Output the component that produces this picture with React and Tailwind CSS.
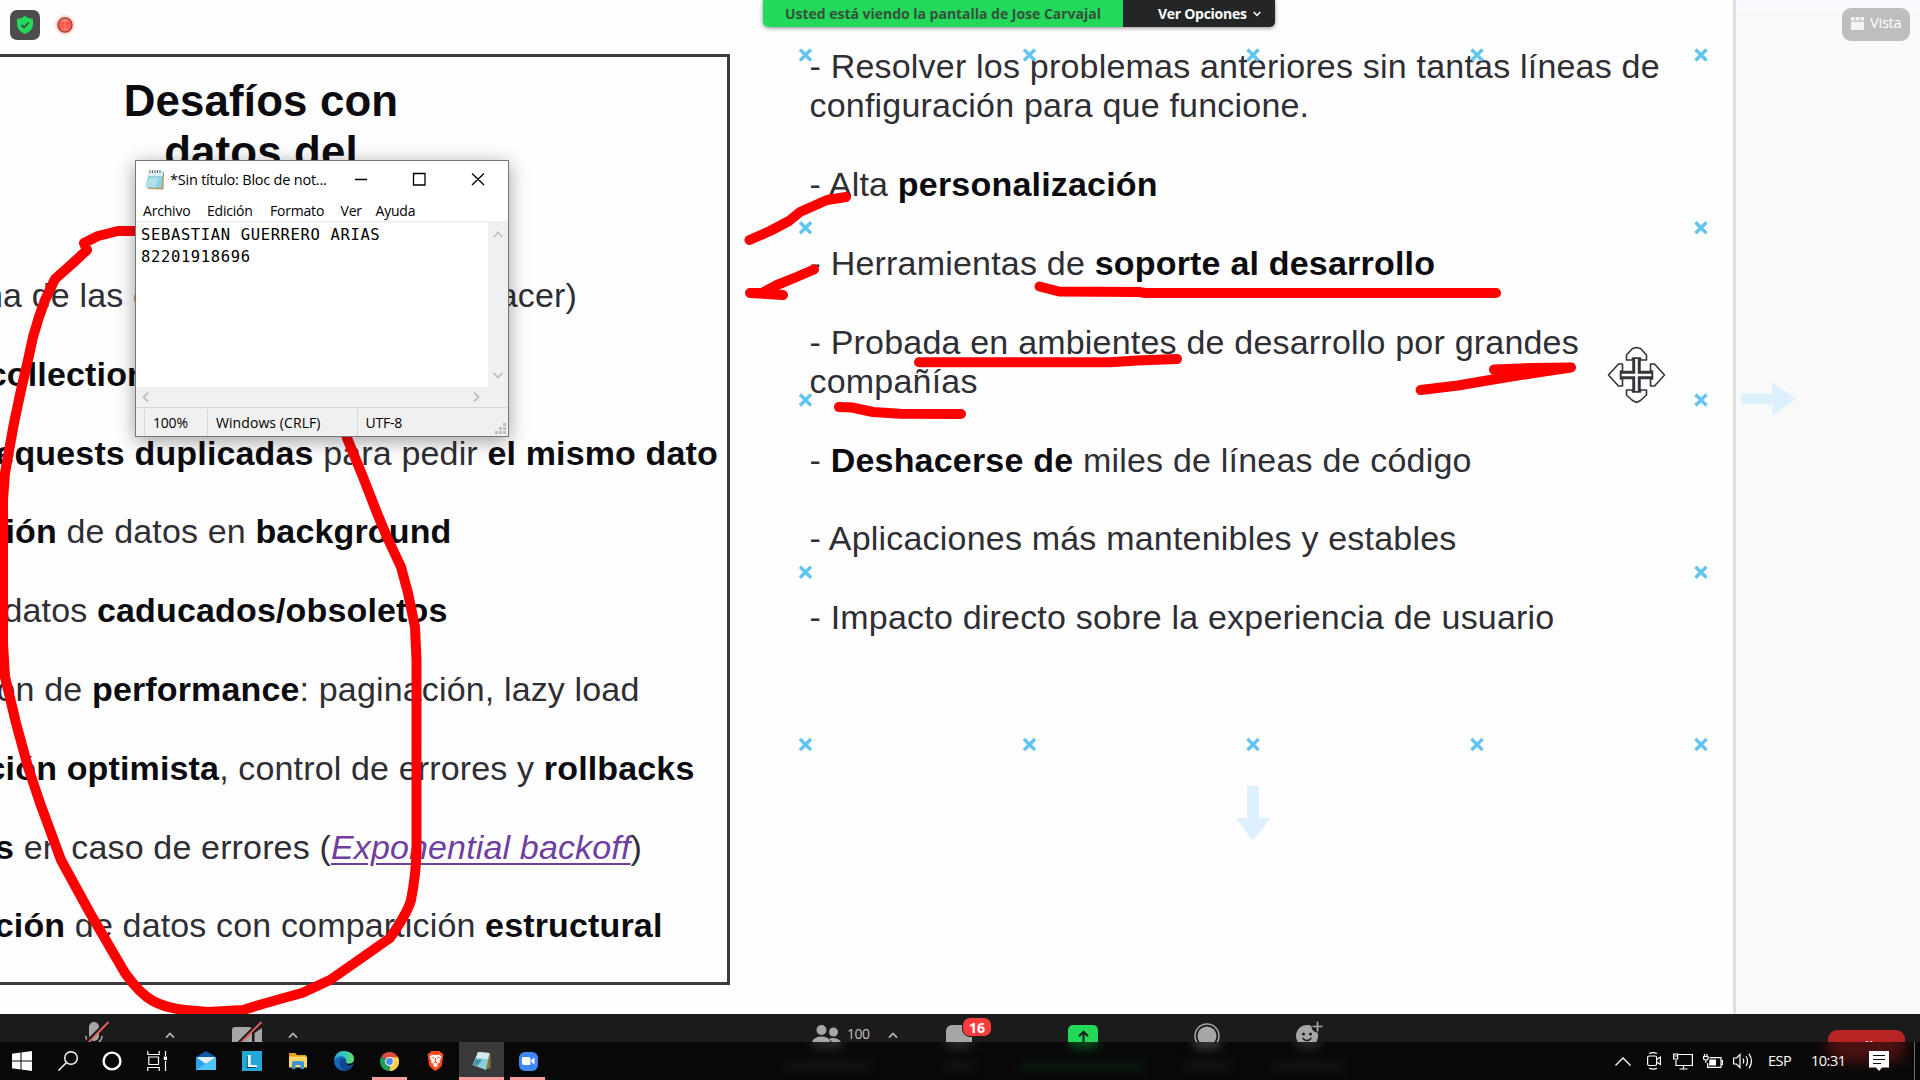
import React from "react";

const B = ({ children }) => <b className="font-bold text-[#0c0c10]">{children}</b>;

const Line = ({ w, children }) => (
  <p className={`flex h-[78.8px] justify-end leading-[78.8px] whitespace-pre ${w}`}>
    <span>{children}</span>
  </p>
);

const marks = [
  [805.5, 55], [1029.5, 55], [1253, 55], [1477, 55], [1701, 55],
  [805.5, 227.7], [1701, 227.7],
  [805.5, 400], [1701, 400],
  [805.5, 572.3], [1701, 572.3],
  [805.5, 744.5], [1029.5, 744.5], [1253, 744.5], [1477, 744.5], [1701, 744.5],
];

function ChallengesBox() {
  return (
    <section className="mt-[54px] flex h-[931px] w-[730px] shrink-0 flex-col border-y-[3px] border-r-[3px] border-[#3b3b3d] pt-[18px] text-[34px] tracking-[0.15px] text-[#2e2e34]">
      <h1 className="mb-[78.400px] w-[522px] text-center text-[43.8px] leading-[51.3px] font-bold text-[#0c0c10]">
        Desafíos con
        <br />
        datos del
      </h1>
      <p className="-ml-[16px] flex h-[78.8px] w-[593px] justify-between leading-[78.8px] whitespace-pre">
        <span>na de las c</span>
        <span>hacer)</span>
      </p>
      <Line w="w-[148px]"><B>collection</B></Line>
      <Line w="w-[718px]"><B>requests duplicadas</B> para pedir <B>el mismo dato</B></Line>
      <Line w="w-[451.500px]"><B>ción</B> de datos en <B>background</B></Line>
      <Line w="w-[447.500px]">datos <B>caducados/obsoletos</B></Line>
      <Line w="w-[639.500px]">ón de <B>performance</B>: paginación, lazy load</Line>
      <Line w="w-[694.500px]"><B>ción optimista</B>, control de errores y <B>rollbacks</B></Line>
      <Line w="w-[642px]">
        <B>s</B> en caso de errores (<i className="text-[#6f3fa0] underline decoration-[2px] underline-offset-[4px]">Exponential backoff</i>)
      </Line>
      <Line w="w-[662.500px]"><B>ción</B> de datos con compartición <B>estructural</B></Line>
    </section>
  );
}

function Benefits() {
  return (
    <section className="ml-[79.500px] flex w-[923.500px] shrink-0 flex-col gap-[39.36px] pt-[47px] text-[34px] leading-[39.36px] tracking-[0.2px] whitespace-nowrap text-[#2e2e34]">
      <p>- Resolver los problemas anteriores sin tantas líneas de<br />configuración para que funcione.</p>
      <p>- Alta <B>personalización</B></p>
      <p>- Herramientas de <B>soporte al desarrollo</B></p>
      <p>- Probada en ambientes de desarrollo por grandes<br />compañías</p>
      <p>- <B>Deshacerse de</B> miles de líneas de código</p>
      <p>- Aplicaciones más mantenibles y estables</p>
      <p>- Impacto directo sobre la experiencia de usuario</p>
    </section>
  );
}

function Annotations() {
  return (
    <svg className="absolute inset-0" width="1920" height="1014" viewBox="0 0 1920 1014" fill="none">
      <g stroke="#62c4f1" strokeWidth="3.400">
        {marks.map(([x, y]) => (
          <path key={`${x}-${y}`} d={`M${x - 5.5} ${y - 5.5}l11 11m0-11l-11 11`} />
        ))}
      </g>
      <g fill="#dcf1fb">
        <path d="M1741 393.500h31.500v-11l24 16.500-24 16.500v-11h-31.500z" />
        <path d="M1247 786h12v32h11.500l-17.500 23-17.500-23h11.500z" />
      </g>
      <g stroke="#ff0000" strokeWidth="10" strokeLinecap="round" strokeLinejoin="round">
        <path d="M150 231H118L98 236 84 243 87 250 73 263 55 279 45 300 39 317 33 337 28 360 21 390 14 423 5 473 3 500V643L5 677 16 723 28 767 40 803 61 860 90 913 125 973Q140 994 153 1001Q166 1008 185 1010L208 1012 243 1010Q265 1003 302 993L330 980 363 957 390 938Q408 912 411 900Q416 875 416.500 850V660L415 627 408 593 401 567 387 537 377 513 363 477 347 438 343 420" />
        <path d="M749.500 240L770 231 789 221 800 212 827 200 846 197" />
        <path d="M814 269.500L796.500 277 777 285 762 293H750L783 295" />
        <path d="M1039.500 286.500L1059 291.500 1139 292 1145 293H1496" />
        <path d="M919 362.300H1110L1137 360.500 1177 359" />
        <path d="M839 407L852 407.500 873 412 900 413.700 961 414" />
        <path d="M1420.600 390L1458 385.500 1490 380 1537 372.500 1571 367.500 1533 368 1494 369.500 1515 373" />
      </g>
      <g transform="translate(1636.500 375)">
        <path d="M-16 0H16M0-17V17" stroke="#fff" strokeWidth="11" />
        <path d="M-16 0H16M0-17V17" stroke="#34343a" strokeWidth="8.500" />
        <path d="M-15 0H15M0-16V16" stroke="#fff" strokeWidth="2.600" />
        <g fill="#fff" stroke="#34343a" strokeWidth="1.600" strokeLinejoin="round">
          <path d="M-10-15V-20L-4-26.500 0-27.500 4-26.500 10-20V-15H4V-17H-4V-15Z" />
          <path d="M-10 15V20L-4 25.500 0 27.500 4 25.500 10 20V15H4V17H-4V15Z" />
          <path d="M-14-4V-11H-18L-28 0-18 11H-14V4H-16V-4Z" />
          <path d="M14-4V-11H18L28 0 18 11H14V4H16V-4Z" />
        </g>
      </g>
    </svg>
  );
}

function ShareBanner() {
  return (
    <div className="absolute top-0 left-[763px] flex h-[27px] w-[512px] overflow-hidden rounded-b-[5px] font-['Open_Sans','Noto_Sans',sans-serif] text-[14px] leading-[27px] font-bold whitespace-nowrap shadow-[0_1px_4px_rgba(0,0,0,0.45)]">
      <div className="w-[360px] bg-[#23d959] pl-[22px] tracking-[-0.02px] text-[#36513e]">Usted está viendo la pantalla de Jose Carvajal</div>
      <div className="flex flex-1 items-center gap-[6px] bg-[#242526] pl-[35px] tracking-[-0.28px] text-white">
        Ver Opciones
        <svg width="8" height="6" viewBox="0 0 8 6" fill="none" stroke="#fff" strokeWidth="1.500"><path d="M.7 1L4 4.500 7.300 1" /></svg>
      </div>
    </div>
  );
}

function MeetingBadges() {
  return (
    <>
      <div className="absolute top-[10px] left-[10px] flex items-center gap-[14px]">
        <div className="flex h-[30px] w-[30px] items-center justify-center rounded-[7px] bg-[#4d4d4d]">
          <svg width="16" height="18" viewBox="0 0 16 18"><path d="M8 0Q11 2.500 16 3V8Q16 15 8 18Q0 15 0 8V3Q5 2.500 8 0Z" fill="#23d959" /><path d="M4.500 9L7 11.500 11.700 6.500" fill="none" stroke="#3d4d40" strokeWidth="1.800" /></svg>
        </div>
        <svg width="22" height="24" viewBox="0 0 22 24">
          <defs>
            <radialGradient id="halo"><stop offset=".6" stopColor="#ff8a70" stopOpacity=".6" /><stop offset="1" stopColor="#ff8a70" stopOpacity="0" /></radialGradient>
            <linearGradient id="lamp" x1="0" y1="0" x2="0" y2="1"><stop offset="0" stopColor="#ff9a94" /><stop offset=".45" stopColor="#f7473d" /><stop offset="1" stopColor="#ff7c72" /></linearGradient>
          </defs>
          <circle cx="11" cy="12" r="11" fill="url(#halo)" />
          <circle cx="11" cy="12" r="7" fill="url(#lamp)" stroke="#a5423a" strokeWidth="1.400" />
          <path d="M5 12h12M11 6v12" stroke="#ffaaa2" strokeWidth=".7" opacity=".6" />
        </svg>
      </div>
      <div className="absolute top-[8px] right-[10px] flex h-[33px] w-[68px] items-center gap-[6px] rounded-[9px] bg-[#bebebe] pb-[3px] pl-[9px] font-['Open_Sans','Noto_Sans',sans-serif] text-[14.500px] tracking-[-0.200px] text-white">
        <svg width="13" height="13" viewBox="0 0 13 13" fill="#f4f4f4"><path d="M0 0h3.600v3.500H0zM4.700 0h3.600v3.500H4.700zM9.400 0H13v3.500H9.400zM0 4.700h13V12q0 1-1 1H1q-1 0-1-1z" /></svg>
        Vista
      </div>
    </>
  );
}

const Notebook = ({ size }) => (
  <svg width={size} height={size} viewBox="0 0 20 20">
    <path d="M5 3L19 2 18.500 19.500 3 19Z" fill="#b49a5c" />
    <path d="M4 1.500L18 1.500 16.500 18 0.500 17.500Z" fill="#8fd0e2" />
    <path d="M4 1.500L18 1.500 17.500 6 3.200 6Z" fill="#d9f0f5" />
    <path d="M4 8L14 7.500 10 17.500 1 16.500Z" fill="#b9e4ee" opacity=".8" />
    <path d="M5 0v3M7.500 0v3M10 0v3M12.500 0v3M15 0v3" stroke="#5d7178" strokeWidth="1" />
  </svg>
);

function Notepad() {
  return (
    <div className="absolute top-[160px] left-[135px] flex h-[277px] w-[374px] flex-col border border-[#767676] bg-white font-['Open_Sans','Noto_Sans',sans-serif] text-[14px] tracking-[-0.2px] text-black shadow-[0_4px_18px_rgba(0,0,0,0.38)]">
      <div className="flex h-[37px] shrink-0 items-center pl-[9px]">
        <Notebook size={20} />
        <span className="ml-[5px] w-[185px] text-[14.500px] tracking-[-0.22px] whitespace-nowrap">*Sin título: Bloc de not...</span>
        <svg className="mt-[-1px]" width="130" height="14" viewBox="0 0 130 14" fill="none" stroke="#000" strokeWidth="1.300"><path d="M0 7.500h12M58.500 1.500h11.500v11.500H58.500zM117 1.500l12 11.500m0-11.500l-12 11.500" /></svg>
      </div>
      <div className="flex h-[25px] shrink-0 items-center gap-[14.500px] border-b-[2px] border-[#f0f0f0] pt-[1px] pl-[7px]">
        <span className="w-[49.500px]">Archivo</span>
        <span className="w-[48.500px]">Edición</span>
        <span className="w-[56px]">Formato</span>
        <span className="w-[20.500px]">Ver</span>
        <span>Ayuda</span>
      </div>
      <div className="flex flex-1">
        <div className="flex-1 pt-[1px] pl-[5px] font-['DejaVu_Sans_Mono',monospace] text-[15.500px] leading-[22px] tracking-[0.64px] whitespace-pre">
          SEBASTIAN GUERRERO ARIAS
          <br />
          82201918696
        </div>
        <div className="flex w-[20px] flex-col items-center justify-between bg-[#f0f0f0] py-[8px]">
          <svg width="10" height="7" viewBox="0 0 10 7" fill="none" stroke="#bdbdbd" strokeWidth="1.800"><path d="M.7 6L5 1.500 9.300 6" /></svg>
          <svg width="10" height="7" viewBox="0 0 10 7" fill="none" stroke="#bdbdbd" strokeWidth="1.800"><path d="M.7 1L5 5.500 9.300 1" /></svg>
        </div>
      </div>
      <div className="flex h-[20px] shrink-0 items-center justify-between bg-[#f0f0f0] pr-[28px] pl-[6px]">
        <svg width="7" height="10" viewBox="0 0 7 10" fill="none" stroke="#bdbdbd" strokeWidth="1.800"><path d="M6 .7L1.500 5 6 9.300" /></svg>
        <svg width="7" height="10" viewBox="0 0 7 10" fill="none" stroke="#bdbdbd" strokeWidth="1.800"><path d="M1 .7L5.500 5 1 9.300" /></svg>
      </div>
      <div className="flex h-[29px] shrink-0 border-t border-[#d7d7d7] bg-[#f0f0f0] pt-[1px] pl-[8px] leading-[27px]">
        <span className="w-[63px] border-l border-[#d7d7d7] pl-[8px]">100%</span>
        <span className="w-[150px] border-l border-[#d7d7d7] pl-[8px] tracking-[0.08px]">Windows (CRLF)</span>
        <span className="flex-1 border-l border-[#d7d7d7] pl-[7.500px]">UTF-8</span>
        <svg className="mt-[14px] mr-[2px]" width="11" height="11" viewBox="0 0 11 11" fill="#bdbdbd"><path d="M8 0h3v3H8zM8 4h3v3H8zM8 8h3v3H8zM4 4h3v3H4zM4 8h3v3H4zM0 8h3v3H0z" /></svg>
      </div>
    </div>
  );
}

const Caret = ({ className }) => (
  <svg className={`absolute ${className}`} width="10" height="7" viewBox="0 0 10 7" fill="none" stroke="#b4b4b4" strokeWidth="1.800"><path d="M1 5.700L5 1.500 9 5.700" /></svg>
);

function MeetingToolbar() {
  return (
    <div className="relative flex h-[28px] shrink-0 overflow-hidden bg-[#1b1b1b] font-['Open_Sans','Noto_Sans',sans-serif] text-[#b4b4b4]">
      <svg className="mt-[6px] ml-[84px] shrink-0" width="28" height="22" viewBox="0 0 28 22" fill="none">
        <rect x="5" y="2" width="10" height="19" rx="5" fill="#a6a6a6" />
        <path d="M1.800 16Q2 22 9 24M18 16Q18 22 11 24" stroke="#a6a6a6" strokeWidth="1.600" />
        <path d="M2 23L23 2" stroke="#1b1b1b" strokeWidth="3.500" />
        <path d="M4 23L24.500 2" stroke="#f0605d" strokeWidth="1.800" />
      </svg>
      <Caret className="top-[18px] left-[165px]" />
      <svg className="mt-[6px] ml-[120px] shrink-0" width="32" height="22" viewBox="0 0 32 22" fill="none">
        <path d="M0 22V10Q0 7 3 7H17Q20 7 20 10V22ZM22.500 13L30 8V22H22.500Z" fill="#a6a6a6" />
        <path d="M6 24L28 2" stroke="#1b1b1b" strokeWidth="3.500" />
        <path d="M7.500 24L29.500 2" stroke="#f0605d" strokeWidth="1.800" />
      </svg>
      <Caret className="top-[18px] left-[288px]" />
      <svg className="mt-[10px] ml-[548px] shrink-0" width="30" height="18" viewBox="0 0 30 18" fill="#a6a6a6">
        <circle cx="9.500" cy="6" r="5" /><circle cx="21.500" cy="8" r="4.500" />
        <path d="M0 18Q2 12.500 9.500 12.500T18.500 18ZM17 14.500Q25 12.500 29 18H20Z" />
      </svg>
      <span className="ml-[5px] pt-[8.500px] text-[14px] leading-[22px] tracking-[-0.5px] text-[#c2c2c2]">100</span>
      <Caret className="top-[18px] left-[888px]" />
      <div className="absolute top-[11px] left-[946px] h-[30px] w-[26px] rounded-[6px] bg-[#a6a6a6]" />
      <div className="absolute top-[3px] left-[962px] flex h-[20px] w-[30px] items-center justify-center rounded-[8px] border border-[#1b1b1b] bg-[#fa3c3c] text-[14px] font-bold text-white">16</div>
      <div className="absolute top-[11px] left-[1068px] h-[30px] w-[30px] rounded-[5px] bg-[#23d959] pl-[10px]">
        <svg className="mt-[5px]" width="11" height="14" viewBox="0 0 11 14" fill="none" stroke="#1b1b1b" strokeWidth="2"><path d="M5.500 14V2M1 6.200L5.500 1.700 10 6.200" /></svg>
      </div>
      <svg className="absolute top-[9px] left-[1194px]" width="26" height="26" viewBox="0 0 26 26"><circle cx="13" cy="13" r="12" fill="none" stroke="#a6a6a6" strokeWidth="1.500" /><circle cx="13" cy="13" r="9.500" fill="#a6a6a6" /></svg>
      <svg className="absolute top-[6px] left-[1295px]" width="30" height="28" viewBox="0 0 30 28" fill="none">
        <circle cx="12" cy="16" r="11" fill="#a6a6a6" />
        <circle cx="22.500" cy="6.500" r="6" fill="#1b1b1b" />
        <path d="M22.500 1.500v10M17.500 6.500h10" stroke="#a6a6a6" strokeWidth="1.700" />
        <circle cx="8.500" cy="14" r="1.500" fill="#1b1b1b" /><circle cx="15.500" cy="14" r="1.500" fill="#1b1b1b" />
        <path d="M7.500 18Q12 23 16.500 18" stroke="#1b1b1b" strokeWidth="1.600" />
      </svg>
      <div className="absolute top-[16px] left-[1828px] h-[32px] w-[77px] rounded-[9px] bg-[#b72424] pt-[6px] pr-[5px] text-center text-[15px] leading-[20px] font-semibold text-white">Salir</div>
    </div>
  );
}

const Slot = ({ w = "w-[46px]", className = "", children }) => (
  <div className={`relative flex h-full shrink-0 items-center justify-center ${w} ${className}`}>{children}</div>
);

function Taskbar() {
  return (
    <div className="relative flex h-[38px] shrink-0 overflow-hidden bg-[#080808] text-white">
      <div className="absolute top-[-14px] left-[1826px] h-[34px] w-[80px] rounded-full bg-[#7a1818] opacity-60 blur-[7px]" />
      <div className="absolute top-[-8px] left-[1070px] h-[14px] w-[28px] bg-[#0c7a2d] opacity-60 blur-[5px]" />
      <div className="absolute top-[-7px] left-[812px] h-[14px] w-[30px] bg-[#555] opacity-40 blur-[5px]" />
      <div className="absolute top-[-7px] left-[946px] h-[14px] w-[26px] bg-[#555] opacity-40 blur-[5px]" />
      <div className="absolute top-[-7px] left-[1194px] h-[14px] w-[26px] bg-[#666] opacity-50 blur-[5px]" />
      <div className="absolute top-[-7px] left-[1296px] h-[14px] w-[24px] bg-[#555] opacity-40 blur-[5px]" />
      <div className="absolute top-[19px] left-[782px] h-[10px] w-[88px] bg-[#141414] blur-[5px]" />
      <div className="absolute top-[19px] left-[944px] h-[10px] w-[30px] bg-[#141414] blur-[5px]" />
      <div className="absolute top-[19px] left-[1020px] h-[10px] w-[126px] bg-[#091a0e] blur-[5px]" />
      <div className="absolute top-[19px] left-[1184px] h-[10px] w-[46px] bg-[#141414] blur-[5px]" />
      <div className="absolute top-[19px] left-[1270px] h-[10px] w-[76px] bg-[#141414] blur-[5px]" />

      <Slot w="w-[45px]" className="pr-px"><svg width="20" height="20" viewBox="0 0 20 20" fill="#fff"><path d="M0 2.800L8.500 1.600V9.500H0ZM9.500 1.500L20 0V9.500H9.500ZM0 10.500H8.500V18.400L0 17.200ZM9.500 10.500H20V20L9.500 18.500Z" /></svg></Slot>
      <Slot w="w-[45px]"><svg width="20" height="20" viewBox="0 0 20 20" fill="none" stroke="#fff" strokeWidth="1.400"><circle cx="13" cy="7" r="6.300" /><path d="M8.500 11.500L.5 19.500" /></svg></Slot>
      <Slot w="w-[45px]" className="pr-px"><svg width="20" height="20" viewBox="0 0 20 20" fill="none" stroke="#fff" strokeWidth="2.400"><circle cx="10" cy="10" r="8.400" /></svg></Slot>
      <Slot w="w-[48px]" className="pr-[4px]"><svg width="20" height="20" viewBox="0 0 20 20" fill="none" stroke="#fff" strokeWidth="1.200"><path d="M.8 0V3.500H12.200V0M.8 20V16.500H12.200V20M1.800 6H11.500V13.500H1.800ZM18.500 0V5M18.500 10V20" /><path d="M16.800 5.500H20V9H16.800Z" fill="#fff" stroke="none" /></svg></Slot>
      <Slot><svg width="20" height="20" viewBox="0 0 20 20"><path d="M0 6L10 0 20 6V14H0Z" fill="#0a5aa8" /><path d="M1.500 6H18.500V13H1.500Z" fill="#e9f3fa" /><path d="M0 6L10 13 20 6V19H0Z" fill="#2ba3ec" /><path d="M0 19L20 6V19Z" fill="#4fc6f7" /></svg></Slot>
      <Slot><div className="flex h-[20px] w-[20px] items-center justify-center bg-[#22a9d8] pt-px font-['Liberation_Sans',sans-serif] text-[17px] leading-[20px] font-bold text-white [text-shadow:-1px_1px_0_#143f66]">L</div></Slot>
      <Slot><svg width="18" height="16" viewBox="0 0 18 16"><path d="M0 0H6.500L8 2H17V6H0Z" fill="#e5a219" /><path d="M0 3.500H18V14.500H0Z" fill="#fcd866" /><path d="M3 16V10Q3 8 5 8H13Q15 8 15 10V16H11.500V12H6.500V16Z" fill="#3d95dc" /></svg></Slot>
      <Slot>
        <svg width="20" height="20" viewBox="0 0 20 20">
          <defs><linearGradient id="edgeTop"><stop offset="0" stopColor="#26a7dd" /><stop offset=".55" stopColor="#37c9b8" /><stop offset="1" stopColor="#63dc55" /></linearGradient></defs>
          <circle cx="10" cy="10" r="10" fill="#1468bd" />
          <path d="M0 9.500Q1 0 10 0Q20 .5 20 8Q19.500 12.500 15 12.800Q11.500 12.800 12 10.800Q13 8 10 6Q5 3.500 0 9.500Z" fill="url(#edgeTop)" />
          <path d="M5.500 12Q5.500 7 10.500 7.500Q12.500 9 11.700 11.500Q12 14 15.500 14.200 18 14 19.500 12.800 17 19.500 11 19.500 6 17.500 5.500 12Z" fill="#0c4a8d" />
          <path d="M10.500 7.500Q12.500 9 11.700 11.500Q12 14 15.500 14.200 18 14 20 12.500V10.500Q18 12.800 15 12.800 11.500 12.800 12 10.800 12.500 9 10.500 7.500Z" fill="#080808" />
        </svg>
      </Slot>
      <Slot className="pr-px">
        <svg width="19" height="19" viewBox="0 0 20 20">
          <path d="M10 10L1.340 5A10 10 0 0 1 18.660 5Z" fill="#dd4b3e" />
          <path d="M10 10L18.660 5A10 10 0 0 1 10 20Z" fill="#fdd04e" />
          <path d="M10 10L10 20A10 10 0 0 1 1.340 5Z" fill="#1b9e5a" />
          <path d="M10 5.500H18.900A10 10 0 0 1 10 20L14 12Z" fill="#fdd04e" />
          <circle cx="10" cy="10" r="4.700" fill="#f4f4f4" /><circle cx="10" cy="10" r="3.600" fill="#4a8af4" />
        </svg>
        <div className="absolute bottom-0 left-[5px] h-[3px] w-[35px] bg-[#ff9da0]" />
      </Slot>
      <Slot className="pr-px">
        <svg width="17" height="20" viewBox="0 0 17 20"><path d="M4.500 0H12.500L14.500 2 16.500 3 16 6 15 14Q14.500 16 8.500 20 2.500 16 2 14L1 6 .5 3 2.500 2Z" fill="#fb4b1c" /><path d="M4.500 3.500L8.500 4.200 12.500 3.500 14.500 6 12.500 10 13 11.500 10 13 11 14.500 8.500 16.500 6 14.500 7 13 4 11.500 4.500 10 2.500 6Z" fill="#fff" /><path d="M4.500 6.500L7 7.200M12.500 6.500L10 7.200M8.500 7V11M6.500 11L8.500 12 10.500 11" stroke="#fb4b1c" strokeWidth="1" fill="none" /></svg>
      </Slot>
      <Slot className="pb-px">
        <div className="absolute inset-y-0 left-0 w-[45px] border-b-[3px] border-[#ff9da0] bg-[#3a3a3a]" />
        <svg className="relative" width="20" height="20" viewBox="0 0 20 20">
          <path d="M12 2L18.500 3 18.500 17 13 19Z" fill="#8b7340" />
          <path d="M6 1L17.500 2 14 19 .5 14Z" fill="#8ccbd8" /><path d="M6 1L17.500 2 16 8 4 7Z" fill="#d3ebf0" /><path d="M4 8L10 9 5 15 1 13.500Z" fill="#3c95a8" />
        </svg>
      </Slot>
      <Slot>
        <div className="flex h-[19px] w-[19px] items-center justify-center rounded-[6px] bg-[#3f87f8]">
          <svg width="13" height="8" viewBox="0 0 13 8" fill="#fff"><path d="M0 1Q0 0 1 0H6.500Q8.500 0 8.500 2V7Q8.500 8 7.500 8H2Q0 8 0 6ZM9.300 3L12.500.5V7.500L9.300 5Z" /></svg>
        </div>
        <div className="absolute bottom-0 left-[5px] h-[3px] w-[35px] bg-[#ff9da0]" />
      </Slot>

      <div className="relative ml-auto flex items-center font-['Open_Sans','Noto_Sans',sans-serif] text-[14.500px] tracking-[-0.500px]">
        <svg className="mr-[16px]" width="16" height="9" viewBox="0 0 16 9" fill="none" stroke="#fff" strokeWidth="1.300"><path d="M.5 8.500L8 1 15.500 8.500" /></svg>
        <svg className="mr-[12px]" width="14" height="18" viewBox="0 0 14 18" fill="none" stroke="#fff" strokeWidth="1.200"><rect x=".6" y="4" width="9" height="9.500" rx="1.500" /><path d="M9.600 7.500L13.400 5V12.500L9.600 10M2 1.500Q6 -.2 10 1.500M2 16.200Q6 17.900 10 16.200" /></svg>
        <svg className="mr-[10px]" width="20" height="17" viewBox="0 0 20 17" fill="none" stroke="#fff" strokeWidth="1.200"><path d="M5 1.500H19.400V12.500H3V7M10.500 12.500V15.800M6.500 16H14.500" /><path d="M.6 1H4.600V6H.6ZM1.500 3H4" /></svg>
        <svg className="mr-[10px]" width="20" height="15" viewBox="0 0 20 15" fill="none" stroke="#fff" strokeWidth="1.200"><path d="M6.500 3.600H18V13.400H4.600V9M18 6.500H19.500V10.500H18M1.500 0V2.500M4 0V2.500M.6 2.500H5V4.500Q5 6 2.800 6 .6 6 .6 4.500ZM2.800 6V9" /><path d="M6.500 5.500H13V11.500H6Z" fill="#fff" stroke="none" /></svg>
        <svg className="mr-[15px]" width="20" height="18" viewBox="0 0 20 18" fill="none" stroke="#fff" strokeWidth="1.200"><path d="M.6 6H3.500L7 2.500V15.500L3.500 12H.6ZM10 6.500Q11.500 9 10 11.500M13 4.200Q16 9 13 13.800M16 1.800Q21 9 16 16.200" /></svg>
        <span className="w-[43px]">ESP</span>
        <span className="w-[58px]">10:31</span>
        <svg className="mr-[25px]" width="20" height="20" viewBox="0 0 20 20"><path d="M0 0H20V16.500H13L10 20 7 16.500H0Z" fill="#fff" /><path d="M4 4.500H16M4 8.500H16M4 12.500H12" stroke="#0b0b0b" strokeWidth="1.200" /></svg>
        <div className="mr-[5px] h-[38px] w-px bg-[#6a6a6a]" />
      </div>
    </div>
  );
}

export default function App() {
  return (
    <div className="relative flex h-[1080px] w-[1920px] flex-col overflow-hidden bg-[#fefefe]">
      <main className="relative flex h-[1014px] shrink-0 overflow-hidden font-['Liberation_Sans',Arial,sans-serif]">
        <ChallengesBox />
        <Benefits />
        <aside className="flex-1 border-l-[3px] border-[#dfdfe2] bg-[#f9f9f9]">
          <div className="h-[12px] bg-[#faf9ff]" />
        </aside>
        <Annotations />
      </main>
      <MeetingToolbar />
      <Taskbar />
      <ShareBanner />
      <MeetingBadges />
      <Notepad />
    </div>
  );
}
